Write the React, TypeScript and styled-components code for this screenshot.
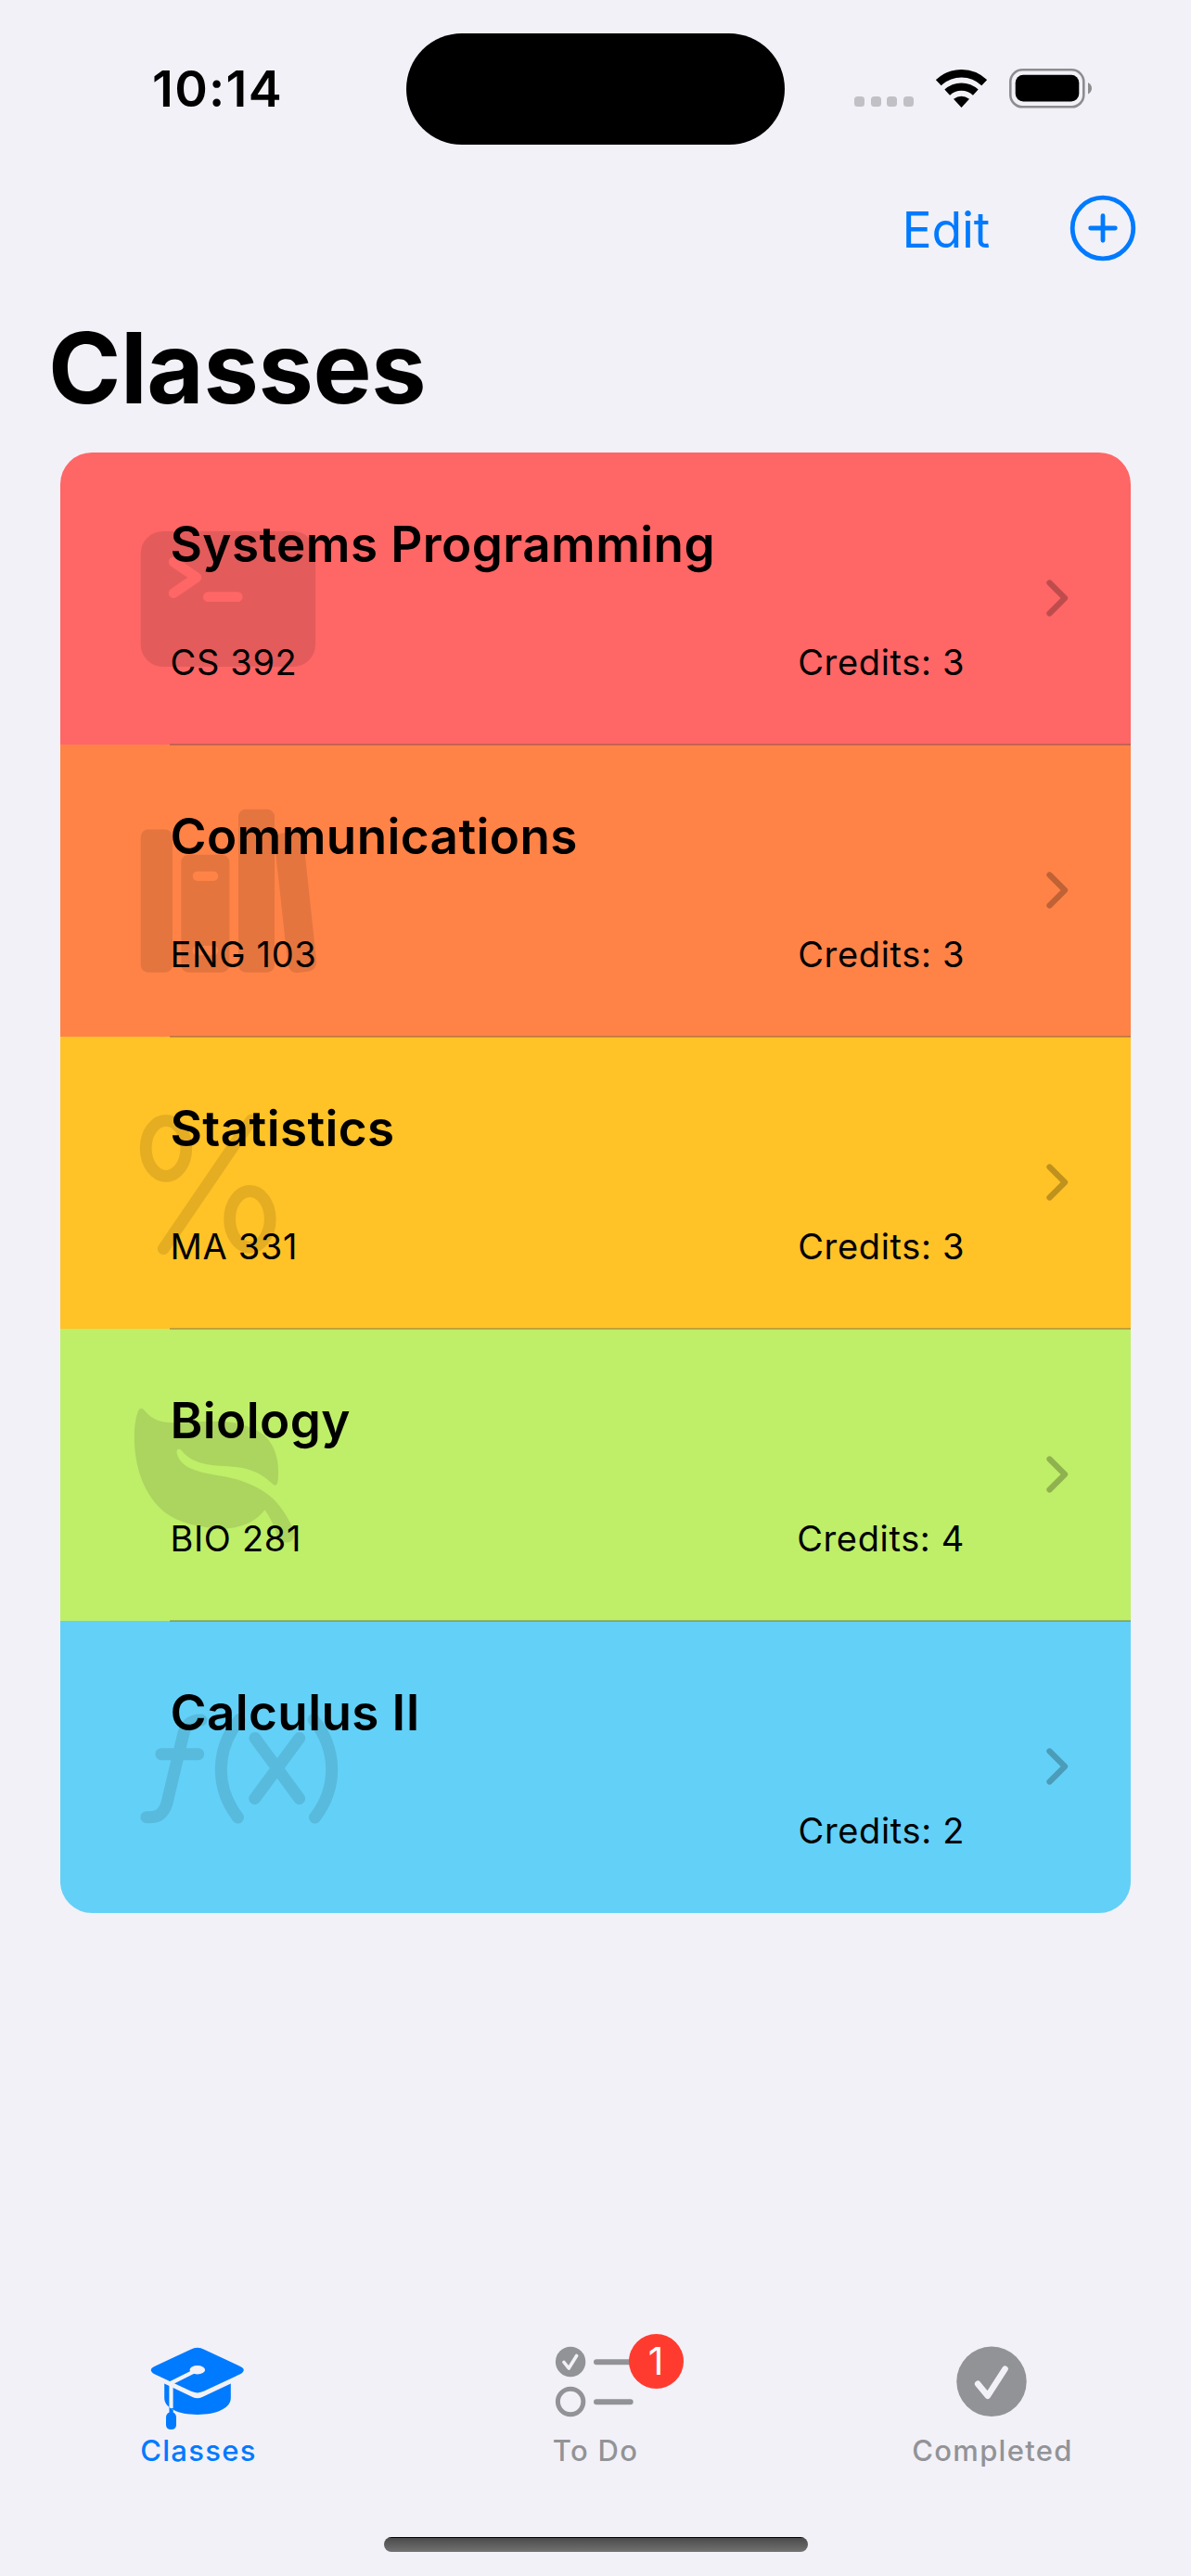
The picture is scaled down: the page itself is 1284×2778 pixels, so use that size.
import React from 'react';
import styled, { createGlobalStyle } from 'styled-components';

const GlobalStyle = createGlobalStyle`
  *, *::before, *::after { box-sizing: border-box; }
  body { margin: 0; background: #f2f1f7; }
`;

const Screen = styled.div`
  width: 1284px;
  height: 2778px;
  display: flex;
  flex-direction: column;
  overflow: hidden;
  background: #f2f1f7;
  color: #000;
  font-family: Inter, 'Liberation Sans', sans-serif;
  font-feature-settings: 'calt' 0;
`;

const StatusBar = styled.header`
  height: 192px;
  flex: none;
  display: flex;
  align-items: center;
  padding-left: 164px;
`;

const Time = styled.span`
  width: 274px;
  font-size: 54px;
  line-height: 60px;
  font-weight: 600;
  letter-spacing: 1.3px;
  white-space: nowrap;
`;

const Island = styled.div`
  width: 408px;
  height: 120px;
  border-radius: 60px;
  background: #000;
`;

const StatusIcons = styled.div`
  display: flex;
  align-items: center;
  margin-left: 75px;
  height: 44px;
`;

const Signal = styled.div`
  display: flex;
  align-self: flex-end;
  gap: 6.5px;
  margin: 0 24px 3px 0;
`;

const SignalDot = styled.i`
  width: 11px;
  height: 11px;
  border-radius: 3.5px;
  background: #c1c0c5;
`;

const BatterySlot = styled.span`
  display: flex;
  margin-left: 24px;
`;

const NavBar = styled.nav`
  height: 108px;
  flex: none;
  display: flex;
  align-items: center;
  justify-content: flex-end;
  gap: 86px;
  padding-right: 59px;
  color: #007aff;
`;

const TextButton = styled.button`
  padding: 4px 0 0;
  border: 0;
  background: none;
  color: inherit;
  font: inherit;
  font-size: 53.5px;
  line-height: 64px;
  letter-spacing: -0.2px;
`;

const IconButton = styled.button`
  display: flex;
  padding: 0;
  border: 0;
  background: none;
  color: inherit;
`;

const Title = styled.h1`
  flex: none;
  height: 188px;
  margin: 0;
  padding: 34px 0 0 52px;
  font-size: 106px;
  line-height: 126px;
  font-weight: 700;
  letter-spacing: -0.4px;
`;

const ClassList = styled.ul`
  flex: none;
  list-style: none;
  width: 1154px;
  margin: 0 0 0 65px;
  padding: 0;
  border-radius: 34px;
  overflow: hidden;
`;

const ClassRow = styled.li<{ $color: string }>`
  position: relative;
  height: 315px;
  display: flex;
  align-items: center;
  justify-content: space-between;
  padding: 0 65px 0 118.5px;
  background: ${(p) => p.$color};

  &:not(:last-child)::after {
    content: '';
    position: absolute;
    z-index: 1;
    left: 118px;
    right: 0;
    bottom: -1px;
    height: 2px;
    background: rgba(60, 60, 67, 0.29);
  }
`;

const Watermark = styled.svg`
  position: absolute;
  left: 75px;
  top: 60px;
  width: 220px;
  height: 200px;
  overflow: visible;
  opacity: 0.1;
`;

const ClassInfo = styled.div`
  position: relative;
  width: 856.5px;
  height: 315px;
  padding-top: 67px;
`;

const ClassName = styled.h2`
  margin: 0 0 72px;
  font-size: 53px;
  line-height: 64px;
  font-weight: 600;
  letter-spacing: 0.4px;
`;

const ClassMeta = styled.div`
  display: flex;
  justify-content: space-between;
  font-size: 38px;
  line-height: 46px;
  letter-spacing: 0.65px;
`;

const TabBar = styled.nav`
  flex: none;
  display: grid;
  grid-template-columns: repeat(3, 1fr);
  margin-top: 447px;
`;

const Tab = styled.a<{ $active?: boolean }>`
  display: flex;
  flex-direction: column;
  align-items: center;
  color: ${(p) => (p.$active ? '#007aff' : '#929397')};
`;

const TabIcon = styled.span`
  position: relative;
  display: flex;
  width: 130px;
  height: 113.5px;
  padding-top: 10px;
`;

const TabLabel = styled.span`
  font-size: 31px;
  line-height: 38px;
  font-weight: 500;
  letter-spacing: 1.3px;
`;

const Badge = styled.span`
  position: absolute;
  left: 100.5px;
  top: 7px;
  width: 59px;
  height: 59px;
  border-radius: 50%;
  background: #ff3b30;
  color: #fff;
  font-size: 41px;
  line-height: 58px;
  text-align: center;
`;

const HomeIndicator = styled.div`
  flex: none;
  width: 457px;
  height: 16px;
  margin: 74px auto 0;
  border-radius: 8px;
  background: linear-gradient(#000 0 1px, #4b4b4b 1px, #727272 100%);
`;

const WifiIcon = () => (
  <svg width="55" height="42" viewBox="0 0 55 42">
    <g fill="none" stroke="#000" strokeWidth="8.4">
      <path d="M2.8 14.2A35.5 35.5 0 0 1 52.2 14.2" />
      <path d="M12.2 24.6A22.5 22.5 0 0 1 42.8 24.6" />
    </g>
    <path d="M27.5 41L19 31.8Q27.5 25.5 36 31.8Z" />
  </svg>
);

const BatteryIcon = () => (
  <svg width="92" height="44" viewBox="0 0 92 44">
    <rect x="1.3" y="1.3" width="79" height="40" rx="13" fill="none" stroke="#8d8d90" strokeWidth="2.6" />
    <rect x="6.7" y="6.8" width="68.6" height="28.8" rx="8.5" />
    <path d="M85 15Q89 17.5 89 21.2T85 27.6Z" fill="#8d8d90" />
  </svg>
);

const PlusCircleIcon = () => (
  <svg width="72" height="72" viewBox="0 0 72 72" fill="none" stroke="currentColor" strokeLinecap="round">
    <circle cx="36" cy="36" r="32.8" strokeWidth="4.8" />
    <path d="M36 22.7V49.3M22.7 36H49.3" strokeWidth="4.8" />
  </svg>
);

const Chevron = styled.svg`
  width: 28px;
  height: 44px;
  margin-bottom: 1px;
  fill: none;
  stroke: #000;
  stroke-opacity: 0.25;
  stroke-width: 6.3px;
  stroke-linecap: round;
  stroke-linejoin: round;
`;

const TerminalArt = () => (
  <>
    <mask id="prompt">
      <rect width="220" height="200" fill="#fff" />
      <path
        d="M47.2 58L71.8 74.7L47.2 91.6M84.4 95.7H116.2"
        fill="none"
        stroke="#000"
        strokeWidth="10.8"
        strokeLinecap="round"
        strokeLinejoin="round"
      />
    </mask>
    <rect x="11.7" y="25" width="188.4" height="146" rx="24" mask="url(#prompt)" />
  </>
);

const BooksArt = () => (
  <>
    <mask id="slots">
      <rect width="220" height="200" fill="#fff" />
      <rect x="67.8" y="76.7" width="27.4" height="10.3" rx="5" />
      <rect x="67.8" y="157" width="27.4" height="10.3" rx="5" />
    </mask>
    <rect x="11.7" y="31.5" width="34.3" height="154.2" rx="8" />
    <rect x="55.3" y="58.7" width="52" height="127" rx="8" mask="url(#slots)" />
    <rect x="117" y="9.7" width="39" height="176" rx="8" />
    <path d="M163 35.5L178 34Q186 33.5 187 41L201 172Q202 183 193 184.5L181 186Q172 186.5 170.3 177L156.5 50Q156 37 163 35.5Z" />
  </>
);

const PercentArt = () => (
  <g fill="none" stroke="#000" strokeWidth="12.8" strokeLinecap="round">
    <ellipse cx="39" cy="60.3" rx="21.8" ry="30" />
    <ellipse cx="129.4" cy="136.8" rx="21.8" ry="30.3" />
    <path d="M36.3 168.7L130.8 30" />
  </g>
);

const LeafArt = () => (
  <path d="M12 26C14 25.5 15 27 17 29.5C24 37.5 33 41 46 41.2C62 41.8 84 38.5 104 40.3C121 42 134 46.5 145.4 55.3C155 64.5 160.3 78 160 95C160 100 159.8 104.5 158.8 107C157.8 109 156.5 109.3 154.3 107.8C146 100 139.5 96 131 92.8C110 86 96 90 77 84.8C66 81.5 60 76.5 55.5 71C53 68.3 50 70 50.6 73.5C52 81 57 86.5 65.4 90.5C82 98 101 97.5 119 103.5C135 109 148 116 158 127C165 135 173 147 176.5 158C178 166 175 170.3 170 170.5C163 171 160.5 168.5 158 161C155 151 151 143 145.4 135.3C136 148 120 155.5 99.3 155.4C75 155 52 148.5 38.8 138.7C15 120 4.5 88 4.8 55.3C4.9 44 6.5 36 8.5 30C9.5 27 10.5 26.3 12 26Z" />
);

const FunctionArt = () => (
  <g fill="none" stroke="#000" strokeWidth="13" strokeLinecap="round">
    <path d="M17.9 151.7H22C33 151.7 38.5 145 41 132L57 65C59.5 52 65 47 77 47M33.9 83.7H73.7" />
    <path d="M118 46.5C92 79 92 120 116.5 152M198 46.5C224 79 224 120 199.5 152" />
    <path d="M135 66.5L182.7 131.5M182.7 66.5L134.7 131.5" />
  </g>
);

const GraduationIcon = () => (
  <svg width="130" height="115" viewBox="-0.5 0 130 115" fill="currentColor">
    <path d="M27.7 50.5L58 65Q63.3 67.5 68.6 65L99.3 50.5V66C99.3 77 84 83.9 63.3 83.9C43 83.9 27.7 77 27.7 66Z" />
    <path d="M56 13.7Q63.3 9.8 70.6 13.7L109 31.7Q117.500 35.7 109 40.5L70.6 58.6Q63.3 62.2 56 58.6L17.5 40.5Q9 35.7 17.5 31.7Z" />
    <path d="M63.3 35.7L35 49.8V77" fill="none" stroke="#f2f1f7" strokeWidth="4.2" />
    <ellipse cx="63.3" cy="35.7" rx="8.3" ry="4.7" fill="#f2f1f7" />
    <path d="M33 76L37.2 79V81.500Q40.5 83 40.5 87V95Q40.5 100 35 100T29.5 95V87Q29.5 83 33 81.500Z" />
  </svg>
);

const ChecklistIcon = () => (
  <svg width="130" height="115" viewBox="0 0 130 115" fill="none" stroke="currentColor">
    <circle cx="38.1" cy="27" r="16.2" fill="currentColor" stroke="none" />
    <path d="M31 27.5L36.2 34L44.6 20.5" stroke="#f2f1f7" strokeWidth="3.6" strokeLinecap="round" strokeLinejoin="round" />
    <circle cx="38.1" cy="70" r="13.7" strokeWidth="5" />
    <path d="M66 27.3H103M66 70.3H102.7" strokeWidth="6" strokeLinecap="round" />
  </svg>
);

const CheckCircleIcon = () => (
  <svg width="130" height="115" viewBox="0.5 0 130 115" fill="none">
    <circle cx="64.5" cy="48.3" r="37.7" fill="currentColor" />
    <path d="M49.7 50.8L60.3 63.7L79 34.8" stroke="#f2f1f7" strokeWidth="6.6" strokeLinecap="round" strokeLinejoin="round" />
  </svg>
);

const classes = [
  { name: 'Systems Programming', code: 'CS 392', credits: 3, color: '#ff6666', Art: TerminalArt },
  { name: 'Communications', code: 'ENG 103', credits: 3, color: '#ff8347', Art: BooksArt },
  { name: 'Statistics', code: 'MA 331', credits: 3, color: '#ffc227', Art: PercentArt },
  { name: 'Biology', code: 'BIO 281', credits: 4, color: '#bfee69', Art: LeafArt },
  { name: 'Calculus II', code: '', credits: 2, color: '#63d0f7', Art: FunctionArt },
];

export default function App() {
  return (
    <Screen>
      <GlobalStyle />
      <StatusBar>
        <Time>10:14</Time>
        <Island />
        <StatusIcons>
          <Signal>
            <SignalDot />
            <SignalDot />
            <SignalDot />
            <SignalDot />
          </Signal>
          <WifiIcon />
          <BatterySlot>
            <BatteryIcon />
          </BatterySlot>
        </StatusIcons>
      </StatusBar>
      <NavBar>
        <TextButton>Edit</TextButton>
        <IconButton aria-label="Add class">
          <PlusCircleIcon />
        </IconButton>
      </NavBar>
      <Title>Classes</Title>
      <ClassList>
        {classes.map(({ name, code, credits, color, Art }) => (
          <ClassRow key={name} $color={color}>
            <Watermark viewBox="0 0 220 200">
              <Art />
            </Watermark>
            <ClassInfo>
              <ClassName>{name}</ClassName>
              <ClassMeta>
                <span>{code}</span>
                <span>Credits: {credits}</span>
              </ClassMeta>
            </ClassInfo>
            <Chevron viewBox="0 0 28 44">
              <path d="M5.5 5.5L22 22L5.5 38.5" />
            </Chevron>
          </ClassRow>
        ))}
      </ClassList>
      <TabBar>
        <Tab $active>
          <TabIcon>
            <GraduationIcon />
          </TabIcon>
          <TabLabel>Classes</TabLabel>
        </Tab>
        <Tab>
          <TabIcon>
            <ChecklistIcon />
            <Badge>1</Badge>
          </TabIcon>
          <TabLabel>To Do</TabLabel>
        </Tab>
        <Tab>
          <TabIcon>
            <CheckCircleIcon />
          </TabIcon>
          <TabLabel>Completed</TabLabel>
        </Tab>
      </TabBar>
      <HomeIndicator />
    </Screen>
  );
}
